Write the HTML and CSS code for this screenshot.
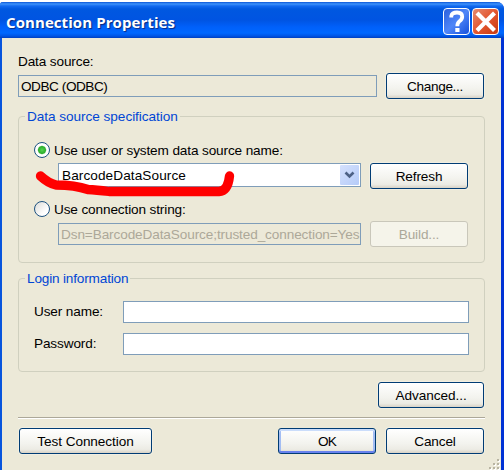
FILE: index.html
```html
<!DOCTYPE html>
<html lang="en">
<head>
<meta charset="utf-8">
<title>Connection Properties</title>
<link rel="stylesheet" href="styles.css">
</head>
<body>
<div class="window">
  <header class="titlebar">
    <h1 class="title">Connection Properties</h1>
    <div class="caption help"><svg width="25" height="25" viewBox="0 0 25 25"><path d="M7.300 8.500V7Q8 3.500 13 3.500Q18.200 3.500 18.200 7.800Q18.200 10.300 15.500 12.200Q13.300 13.800 13.300 17.300" fill="none" stroke="#fff" stroke-width="3.800"/><rect x="11.300" y="19" width="4.200" height="4" fill="#fff"/></svg></div>
    <div class="caption close"><svg width="25" height="25" viewBox="0 0 25 25"><path d="M4 4L21.500 21.500M21.500 4L4 21.500" stroke="#fff" stroke-width="4.200"/></svg></div>
  </header>
  <main class="body">
    <div class="label source-label">Data source:</div>
    <div class="row source-row">
      <div class="field readonly source">ODBC (ODBC)</div>
      <div class="button change">Change...</div>
    </div>

    <section class="group spec">
      <div class="legend"><span>Data source specification</span></div>
      <div class="option first"><i class="radio on"></i><span>Use user or system data source name:</span></div>
      <div class="row sub">
        <div class="field combo"><span class="dsn">BarcodeDataSource</span><i class="drop"><svg width="19" height="20" viewBox="0 0 19 20"><path d="M5.500 7.500L9.500 11.500L13.500 7.500" fill="none" stroke="#4d6185" stroke-width="2.600"/></svg></i></div>
        <div class="button">Refresh</div>
      </div>
      <div class="option second"><i class="radio"></i><span>Use connection string:</span></div>
      <div class="row sub">
        <div class="field readonly off"><span class="clip">Dsn=BarcodeDataSource;trusted_connection=Yes</span></div>
        <div class="button disabled">Build...</div>
      </div>
      <svg class="marker" width="200" height="34" viewBox="0 0 200 34"><path d="M5.500 9Q13 16 21 18Q40 18 53 22.500Q61 23 74 24.500H184Q193 24 194.500 9" fill="none" stroke="#f00" stroke-width="9.300" stroke-linecap="round" stroke-linejoin="round"/></svg>
    </section>

    <section class="group login">
      <div class="legend"><span>Login information</span></div>
      <div class="row entry"><div class="name">User name:</div><div class="field"></div></div>
      <div class="row entry"><div class="name">Password:</div><div class="field"></div></div>
    </section>

    <div class="row advanced"><div class="button wide">Advanced...</div></div>
    <div class="rule"></div>
    <footer class="row actions">
      <div class="button test">Test Connection</div>
      <div class="button ok">OK</div>
      <div class="button">Cancel</div>
    </footer>
  </main>
  <svg class="grip" width="12" height="12" viewBox="0 0 12 12"><g fill="#fff"><path d="M9 1h2v2h-2zM5 5h2v2h-2zM9 5h2v2h-2zM1 9h2v2h-2zM5 9h2v2h-2zM9 9h2v2h-2z"/></g><g fill="#b8b4a2"><path d="M8 0h2v2h-2zM4 4h2v2h-2zM8 4h2v2h-2zM0 8h2v2h-2zM4 8h2v2h-2zM8 8h2v2h-2z"/></g></svg>
</div>
</body>
</html>
```
FILE: styles.css
```css
* { box-sizing: border-box; }
body {
  margin: 0;
  padding-top: 2px;
  height: 470px;
  overflow: hidden;
  background: #fff;
  color: #000;
  font: 13.6px/16px "Liberation Sans", Arial, sans-serif;
  letter-spacing: -.13px;
  white-space: nowrap;
}
.window {
  position: relative;
  height: 468px;
  border-left: 2px solid #0855dd;
  border-right: 3px solid #0032d5;
  border-radius: 3px 7px 0 0;
  background: #ece9d8;
}
.titlebar {
  display: flex;
  align-items: flex-start;
  gap: 2px;
  height: 36px;
  margin: 0 -3px 0 -2px;
  padding: 6px 5px 0 6px;
  border-radius: 3px 7px 0 0;
  background: linear-gradient(#0a55d8 0, #3d92fa 2px, #126af0 4px, #0058e0 7px, #0054e2 18px, #0060fa 25px, #0068ff 31px, #0055e5 34px, #003fc0 36px);
}
.title {
  flex: 1;
  margin: 2px 0 0;
  color: #fff;
  font: bold 15px/24px "Open Sans", sans-serif;
  letter-spacing: .08px;
  text-shadow: 1px 1px 1px #0a2a80;
}
.caption {
  width: 27px;
  height: 27px;
  border: 1px solid #fff;
  border-radius: 4px;
}
.caption svg { display: block; }
.help { background: linear-gradient(135deg, #2b60dc, #4f86f8 50%, #1550dc); }
.close { background: linear-gradient(135deg, #e58a70, #e3562f 50%, #c93a10); }
.body { padding: 16px 16px 0; }
.row { display: flex; }
.source-label { height: 21px; }
.source-row { gap: 9px; margin-top: -2px; align-items: center; }
.field {
  height: 22px;
  padding-left: 2px;
  border: 1px solid #7f9db9;
  background: #fff;
  line-height: 21px;
  overflow: hidden;
}
.readonly { background: #ece9d8; }
.source { width: 359px; letter-spacing: -.45px; }
.button {
  flex: none;
  width: 98px;
  height: 26px;
  border: 1px solid #003c74;
  border-radius: 3px;
  background: linear-gradient(#fff, #f3f3ee 60%, #ecebe4 85%, #d8d2c6);
  box-shadow: 0 0 0 1px rgba(255, 255, 255, .25);
  line-height: 25px;
  text-align: center;
}
.change { letter-spacing: -.35px; }
.disabled { border-color: #c9c7ba; background: #f5f4ea; box-shadow: none; color: #aca899; }
.group {
  position: relative;
  width: 467px;
  border: 1px solid #d0d0bf;
  border-radius: 4px;
}
.spec { height: 147px; margin-top: 17px; padding-left: 15px; }
.legend { display: flex; height: 16px; margin-top: -8px; color: #0046d5; }
.legend span { padding: 0 2px; background: #ece9d8; }
.spec .legend { margin-left: -9px; letter-spacing: -.04px; }
.option { display: flex; gap: 4px; height: 16px; line-height: 17px; }
.first { margin-top: 17px; }
.second { margin-top: 12px; }
.radio {
  width: 16px;
  height: 16px;
  border: 1px solid #1d5281;
  border-radius: 50%;
  background: linear-gradient(135deg, #dcdcd7, #fff 70%);
}
.radio.on { background: radial-gradient(circle, #55d551 0, #2dae2d 3.500px, #fff 4.700px); }
.sub { gap: 9px; margin: 5px 0 0 24px; }
.sub .field { width: 303px; }
.combo { display: flex; height: 24px; padding-left: 3px; line-height: 23px; }
.dsn { letter-spacing: .09px; }
.drop {
  height: 20px;
  width: 19px;
  margin: 1px 1px 0 auto;
  border-radius: 1px;
  background: linear-gradient(135deg, #d5e1fd, #b5cbf8);
}
.drop svg { display: block; }
.second + .sub { margin-top: 4px; }
.off { margin-top: 2px; color: #aca899; letter-spacing: -.11px; }
.clip { display: block; width: 299px; overflow: hidden; }
.marker { position: absolute; left: 16px; top: 50px; }
.login { height: 94px; margin-top: 15px; padding-left: 15px; }
.login .legend { margin-left: -9px; margin-bottom: 14px; letter-spacing: -.17px; }
.entry { height: 22px; margin-bottom: 10px; }
.name { width: 89px; line-height: 21px; }
.entry .field { width: 346px; }
.advanced { width: 466px; margin-top: 10px; justify-content: flex-end; }
.wide { width: 106px; letter-spacing: -.05px; }
.rule { width: 467px; height: 2px; margin-top: 9px; border-top: 1px solid #aca899; background: #fff; }
.actions { width: 466px; margin-top: 9px; padding-left: 1px; gap: 10px; }
.test { width: 133px; margin-right: auto; letter-spacing: -.07px; }
.ok { letter-spacing: -.8px; box-shadow: inset 0 2px #cbddfb, inset 0 -2px #6982ee, inset 2px 0 #a3bdf3, inset -2px 0 #a3bdf3; }
.grip { position: absolute; right: 0; bottom: -1px; }
```
